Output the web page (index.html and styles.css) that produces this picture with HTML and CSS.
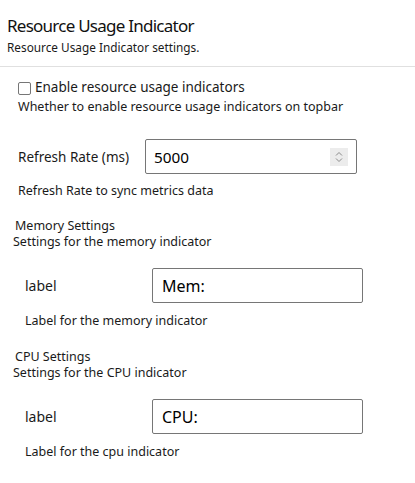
FILE: index.html
```html
<!DOCTYPE html>
<html>
<head>
<meta charset="utf-8">
<link rel="stylesheet" href="styles.css">
</head>
<body>
<div class="header">
  <h1 class="title">Resource Usage Indicator</h1>
  <p class="subtitle">Resource Usage Indicator settings.</p>
</div>
<div class="form">
  <label class="check-row"><span class="checkbox"></span><span>Enable resource usage indicators</span></label>
  <p class="desc top-desc">Whether to enable resource usage indicators on topbar</p>

  <div class="field-row refresh-row">
    <span class="field-label">Refresh Rate (ms)</span>
    <div class="input number">
      <span>5000</span>
      <span class="spinner">
        <svg width="18" height="18" viewBox="0 0 18 18"><path d="M6 7.5 L9 4.5 L12 7.5" fill="none" stroke="#8a8a8a" stroke-width="1"/><path d="M6 10.5 L9 13.5 L12 10.5" fill="none" stroke="#8a8a8a" stroke-width="1"/></svg>
      </span>
    </div>
  </div>
  <p class="desc refresh-desc">Refresh Rate to sync metrics data</p>

  <div class="group">
    <div class="group-title">Memory Settings</div>
    <div class="group-desc">Settings for the memory indicator</div>
    <div class="field-row nested">
      <span class="field-label">label</span>
      <div class="input text"><span>Mem:</span></div>
    </div>
    <p class="desc nested-desc">Label for the memory indicator</p>
  </div>

  <div class="group cpu">
    <div class="group-title">CPU Settings</div>
    <div class="group-desc">Settings for the CPU indicator</div>
    <div class="field-row nested">
      <span class="field-label">label</span>
      <div class="input text"><span>CPU:</span></div>
    </div>
    <p class="desc nested-desc">Label for the cpu indicator</p>
  </div>
</div>
</body>
</html>
```
FILE: styles.css
```css
* { box-sizing: border-box; }
body {
  margin: 0;
  background: #fff;
  color: #1a1a1a;
  font-family: "Noto Sans", "Open Sans", sans-serif;
}
p { margin: 0; }
.header {
  padding: 13px 7px 10px;
  border-bottom: 1px solid #e0e0e0;
}
.title {
  margin: 0;
  font-size: 17px;
  letter-spacing: -0.75px;
  line-height: 25px;
  font-weight: 400;
  color: #111;
}
.subtitle {
  margin-top: 0;
  font-size: 11.8px;
  line-height: 18px;
}
.form { padding: 0; }
.check-row {
  display: flex;
  align-items: center;
  gap: 4px;
  margin: 10px 0 0 18px;
  height: 20px;
  font-size: 13.5px;
}
.checkbox {
  width: 13px;
  height: 13px;
  border: 1px solid #767676;
  border-radius: 2px;
  margin-top: 2px;
}
.desc {
  font-size: 12.5px;
  line-height: 18px;
}
.top-desc { margin: 1px 0 0 18px; }
.field-row {
  display: flex;
  align-items: center;
  margin-left: 18px;
  font-size: 13.5px;
}
.nested { font-size: 14px; }
.refresh-row { margin-top: 23px; }
.field-label { width: 127px; }
.input {
  height: 35px;
  border: 1px solid #767676;
  border-radius: 2px;
  display: flex;
  align-items: center;
  justify-content: space-between;
  font-size: 16px;
  color: #000;
}
.number { width: 212px; padding: 0 8px 0 8px; font-size: 15.3px; }
.text { width: 211px; padding: 0 9px; }
.spinner {
  width: 18px;
  height: 18px;
  background: #ececec;
  display: flex;
}
.refresh-desc { margin: 8px 0 0 18px; }
.group { margin-top: 18px; }
.group.cpu { margin-top: 19px; }
.group-title {
  margin-left: 15px;
  font-size: 12.5px;
  line-height: 16px;
}
.group-desc {
  margin-left: 13px;
  font-size: 12.5px;
  line-height: 16px;
}
.nested { margin: 18px 0 0 25px; }
.nested-desc { margin: 9px 0 0 25px; }
```
